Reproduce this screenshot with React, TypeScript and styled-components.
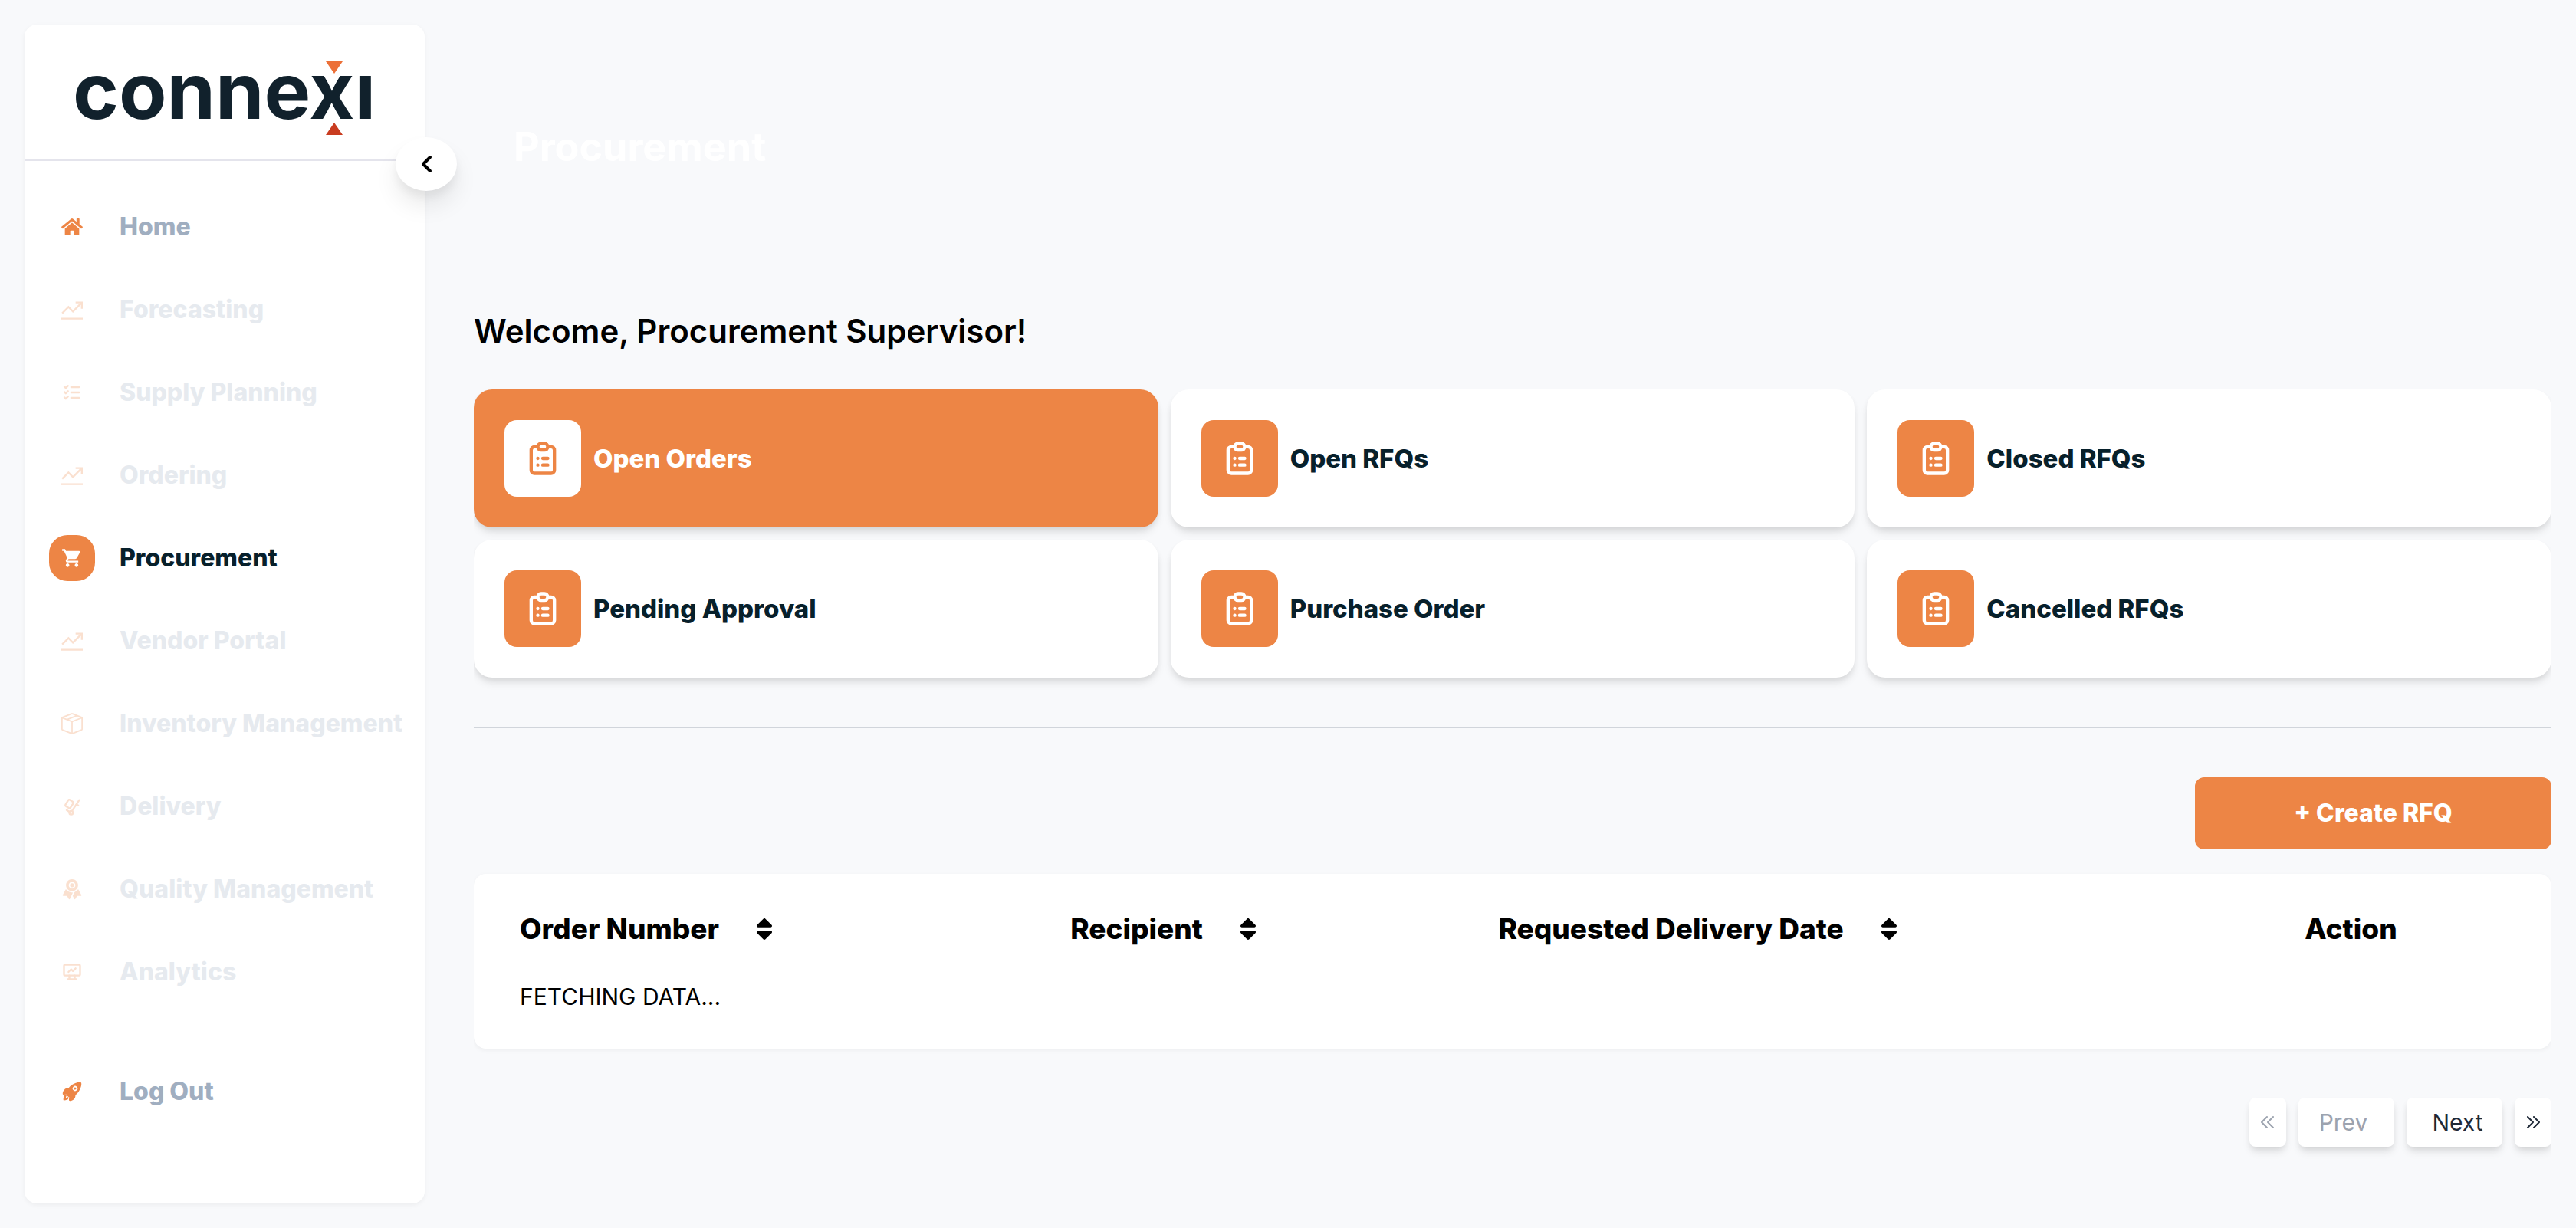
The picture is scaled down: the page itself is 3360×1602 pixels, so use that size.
import React, { useState } from "react";
import styled, { createGlobalStyle, css } from "styled-components";
import type { IconType } from "react-icons";
import { BsBoxSeam } from "react-icons/bs";
import { FaHome, FaSort } from "react-icons/fa";
import { GrLineChart } from "react-icons/gr";
import {
  HiOutlineChevronDoubleLeft,
  HiOutlineChevronDoubleRight,
  HiOutlineClipboardList,
} from "react-icons/hi";
import { IoRibbon, IoRocket } from "react-icons/io5";
import { MdShoppingCart } from "react-icons/md";
import { TbDeviceAnalytics, TbListCheck, TbTrolley } from "react-icons/tb";

const orange = "#ed8545";
const navy = "#07202b";
const slate = "#a0aec0";

const GlobalStyle = createGlobalStyle`
  *, *::before, *::after { box-sizing: border-box; }
  body {
    margin: 0;
    background: #f8f9fb;
    color: #000;
    font-family: Inter, "Open Sans", sans-serif;
    font-size: 30px;
    line-height: 48px;
  }
  button { font: inherit; color: inherit; border: 0; margin: 0; cursor: pointer; }
  h1, h2, ul { margin: 0; padding: 0; }
  svg { display: block; flex: none; }
`;

const Layout = styled.div`
  display: flex;
  align-items: flex-start;
  gap: 64px;
  min-height: 100vh;
  padding: 32px;
`;

const Sidebar = styled.aside`
  position: relative;
  flex: 0 0 522px;
  min-height: calc(100vh - 64px);
  padding-bottom: 64px;
  background: #fff;
  border-radius: 16px;
  box-shadow: 0 2px 6px rgba(0, 0, 0, 0.05);
`;

const Brand = styled.div`
  display: flex;
  justify-content: center;
  padding: 48px 0 32px;
  border-bottom: 2px solid #e4e4ec;

  svg { overflow: visible; }
`;

const Wordmark = styled.text`
  font-family: Inter, sans-serif;
  font-size: 102px;
  font-weight: 700;
  fill: #11212c;
`;

const Toggle = styled.button`
  position: absolute;
  top: 147px;
  right: -42px;
  display: flex;
  align-items: center;
  justify-content: center;
  width: 80px;
  height: 70px;
  padding: 0;
  border-radius: 50%;
  background: #fff;
  box-shadow: 0 20px 30px rgba(0, 0, 0, 0.08), 0 8px 12px rgba(0, 0, 0, 0.05);
`;

const NavList = styled.ul`
  display: flex;
  flex-direction: column;
  gap: 48px;
  padding: 56px 0 0 32px;
  list-style: none;
`;

const NavItem = styled.li<{ $last?: boolean }>`
  margin-top: ${(p) => (p.$last ? "48px" : "0")};
`;

const NavLink = styled.a<{ $state: NavState }>`
  display: flex;
  align-items: center;
  gap: 32px;
  color: ${(p) => (p.$state === "active" ? navy : slate)};
  font-size: 32px;
  font-weight: 800;
  text-decoration: none;
  white-space: nowrap;
  opacity: ${(p) => (p.$state === "disabled" ? 0.25 : 1)};
`;

const NavIcon = styled.span<{ $active: boolean }>`
  display: flex;
  align-items: center;
  justify-content: center;
  width: 60px;
  height: 60px;
  border-radius: 24px;
  font-size: 28px;
  background: ${(p) => (p.$active ? orange : "transparent")};
  color: ${(p) => (p.$active ? "#fff" : orange)};
`;

const Main = styled.main`
  flex: 1;
  min-width: 0;
  overflow-x: clip;
`;

const PageTitle = styled.h1`
  padding: 124px 52px 174px;
  color: #fff;
  font-size: 52px;
  font-weight: 700;
  line-height: 72px;
`;

const Welcome = styled.h2`
  margin-bottom: 46px;
  font-size: 42px;
  font-weight: 600;
  line-height: 60px;
`;

const Cards = styled.div`
  display: grid;
  grid-template-columns: repeat(3, 1fr);
  gap: 16px;
`;

const CardIcon = styled.span`
  display: flex;
  align-items: center;
  justify-content: center;
  width: 100px;
  height: 100px;
  border-radius: 16px;
  font-size: 52px;
`;

const Card = styled.button<{ $active: boolean }>`
  display: flex;
  align-items: center;
  gap: 16px;
  padding: 40px;
  border-radius: 24px;
  font-size: 33px;
  font-weight: 800;
  text-align: left;
  box-shadow: 0 8px 12px -2px rgba(0, 0, 0, 0.1), 0 4px 8px -2px rgba(0, 0, 0, 0.08);
  ${(p) =>
    p.$active
      ? css`
          background: ${orange};
          color: #fff;
          ${CardIcon} { background: #fff; color: ${orange}; }
        `
      : css`
          background: #fff;
          color: ${navy};
          ${CardIcon} { background: ${orange}; color: #fff; }
        `}
`;

const Divider = styled.hr`
  height: 2px;
  margin: 64px 0;
  border: 0;
  background: #d1d5db;
`;

const Actions = styled.div`
  display: flex;
  justify-content: flex-end;
  margin-bottom: 32px;
`;

const CreateButton = styled.button`
  width: 465px;
  padding: 23px 32px;
  border-radius: 12px;
  background: ${orange};
  color: #fff;
  font-size: 32px;
  font-weight: 800;
`;

const TableCard = styled.div`
  padding: 44px 0;
  background: #fff;
  border-radius: 16px;
  box-shadow: 0 2px 6px rgba(0, 0, 0, 0.05);
`;

const Table = styled.table`
  width: 100%;
  table-layout: fixed;
  border-collapse: collapse;
`;

const HeadCell = styled.th<{ $width: string; $align?: string }>`
  width: ${(p) => p.$width};
  padding: 0 60px;
  font-size: 37px;
  font-weight: 800;
  line-height: 56px;
  text-align: ${(p) => p.$align ?? "left"};
`;

const SortButton = styled.button`
  display: flex;
  align-items: center;
  gap: 41px;
  padding: 0;
  background: none;
  white-space: nowrap;

  svg { font-size: 36px; }
`;

const Cell = styled.td`
  padding: 36px 60px 0;
`;

const Pager = styled.nav`
  display: flex;
  justify-content: flex-end;
  gap: 16px;
  margin-top: 64px;
  padding-bottom: 24px;
`;

const PageButton = styled.button<{ $kind: "icon" | "prev" | "next" }>`
  display: flex;
  align-items: center;
  justify-content: center;
  width: ${(p) => (p.$kind === "icon" ? "48px" : "125px")};
  height: 64px;
  padding: ${(p) => ({ icon: "0", prev: "0 32px 0 24px", next: "0 24px 0 32px" })[p.$kind]};
  border-radius: 8px;
  background: #fff;
  color: #1f2937;
  box-shadow: 0 8px 12px -2px rgba(0, 0, 0, 0.1), 0 4px 8px -2px rgba(0, 0, 0, 0.08);

  &:disabled { color: #9ca3af; cursor: default; }
  svg { font-size: 24px; }
`;

type NavState = "normal" | "active" | "disabled";

const navItems: { label: string; Icon: IconType; state: NavState }[] = [
  { label: "Home", Icon: FaHome, state: "normal" },
  { label: "Forecasting", Icon: GrLineChart, state: "disabled" },
  { label: "Supply Planning", Icon: TbListCheck, state: "disabled" },
  { label: "Ordering", Icon: GrLineChart, state: "disabled" },
  { label: "Procurement", Icon: MdShoppingCart, state: "active" },
  { label: "Vendor Portal", Icon: GrLineChart, state: "disabled" },
  { label: "Inventory Management", Icon: BsBoxSeam, state: "disabled" },
  { label: "Delivery", Icon: TbTrolley, state: "disabled" },
  { label: "Quality Management", Icon: IoRibbon, state: "disabled" },
  { label: "Analytics", Icon: TbDeviceAnalytics, state: "disabled" },
  { label: "Log Out", Icon: IoRocket, state: "normal" },
];

const cards = [
  "Open Orders",
  "Open RFQs",
  "Closed RFQs",
  "Pending Approval",
  "Purchase Order",
  "Cancelled RFQs",
];

const columns = [
  { label: "Order Number", width: "26.5%" },
  { label: "Recipient", width: "20.6%" },
  { label: "Requested Delivery Date", width: "33.6%" },
];

function Logo() {
  return (
    <svg width="396" height="96" viewBox="0 0 396 96" role="img" aria-label="connexi">
      <Wordmark x="0" y="75">connexı</Wordmark>
      <polygon points="330,0 352,0 341,16" fill="#ec7038" />
      <polygon points="330,96 352,96 341,80" fill="#c93c20" />
    </svg>
  );
}

export default function App() {
  const [selected, setSelected] = useState("Open Orders");

  return (
    <>
      <GlobalStyle />
      <Layout>
        <Sidebar>
          <Brand>
            <Logo />
          </Brand>
          <Toggle aria-label="Collapse sidebar">
            <svg width="16" height="26" viewBox="0 0 16 26" fill="none">
              <path d="M13 4 4 13l9 9" stroke="#000" strokeWidth="4" strokeLinecap="round" strokeLinejoin="round" />
            </svg>
          </Toggle>
          <NavList>
            {navItems.map(({ label, Icon, state }) => (
              <NavItem key={label} $last={label === "Log Out"}>
                <NavLink href="#" $state={state}>
                  <NavIcon $active={state === "active"}>
                    <Icon />
                  </NavIcon>
                  {label}
                </NavLink>
              </NavItem>
            ))}
          </NavList>
        </Sidebar>

        <Main>
          <PageTitle>Procurement</PageTitle>
          <Welcome>Welcome, Procurement Supervisor!</Welcome>
          <Cards>
            {cards.map((label) => (
              <Card key={label} $active={label === selected} onClick={() => setSelected(label)}>
                <CardIcon>
                  <HiOutlineClipboardList />
                </CardIcon>
                {label}
              </Card>
            ))}
          </Cards>
          <Divider />
          <Actions>
            <CreateButton>+ Create RFQ</CreateButton>
          </Actions>
          <TableCard>
            <Table>
              <thead>
                <tr>
                  {columns.map(({ label, width }) => (
                    <HeadCell key={label} $width={width}>
                      <SortButton>
                        {label}
                        <FaSort />
                      </SortButton>
                    </HeadCell>
                  ))}
                  <HeadCell $width="19.3%" $align="center">Action</HeadCell>
                </tr>
              </thead>
              <tbody>
                <tr>
                  <Cell colSpan={4}>FETCHING DATA...</Cell>
                </tr>
              </tbody>
            </Table>
          </TableCard>
          <Pager aria-label="Pagination">
            <PageButton $kind="icon" disabled aria-label="First page">
              <HiOutlineChevronDoubleLeft />
            </PageButton>
            <PageButton $kind="prev" disabled>Prev</PageButton>
            <PageButton $kind="next">Next</PageButton>
            <PageButton $kind="icon" aria-label="Last page">
              <HiOutlineChevronDoubleRight />
            </PageButton>
          </Pager>
        </Main>
      </Layout>
    </>
  );
}
